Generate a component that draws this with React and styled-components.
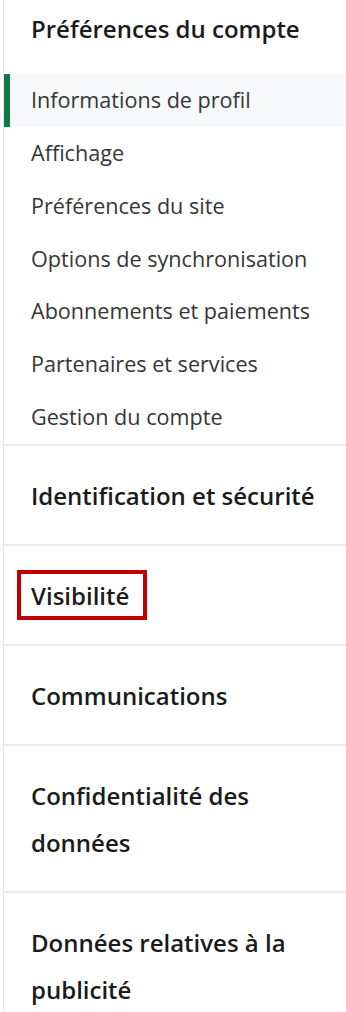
import styled, { createGlobalStyle } from "styled-components";

const GlobalStyle = createGlobalStyle`
  body {
    margin: 0;
    background: #ffffff;
    font-family: "Open Sans", "Noto Sans", sans-serif;
  }
`;

const accountLinks = [
  "Informations de profil",
  "Affichage",
  "Préférences du site",
  "Options de synchronisation",
  "Abonnements et paiements",
  "Partenaires et services",
  "Gestion du compte",
];

const sections = [
  { label: "Identification et sécurité" },
  { label: "Visibilité", marked: true },
  { label: "Communications" },
  { label: "Confidentialité des données" },
  { label: "Données relatives à la publicité" },
];

const App = () => {
  return (
    <>
      <GlobalStyle />
      <Nav>
        <Group>
          <GroupTitle>Préférences du compte</GroupTitle>
          <LinkList>
            {accountLinks.map((link, i) => (
              <LinkItem key={link} $active={i === 0}>
                {link}
              </LinkItem>
            ))}
          </LinkList>
        </Group>
        {sections.map((s) => (
          <Section key={s.label}>
            <SectionTitle $marked={s.marked}>{s.label}</SectionTitle>
          </Section>
        ))}
      </Nav>
    </>
  );
};

const Nav = styled.nav`
  margin-left: 3px;
  border-left: 1px solid #e6e6e6;
  min-height: 1012px;
  width: 343px;
  box-sizing: border-box;
`;

const Group = styled.div`
  padding-top: 5px;
`;

const GroupTitle = styled.h2`
  margin: 0 0 22px;
  padding-left: 27px;
  font-size: 24px;
  font-weight: 600;
  line-height: 47px;
  color: #1b1b1b;
  white-space: nowrap;
`;

const LinkList = styled.ul`
  list-style: none;
  margin: 0;
  padding: 0;
`;

const LinkItem = styled.li`
  height: 52.86px;
  line-height: 52.86px;
  padding-left: ${(p) => (p.$active ? "21px" : "27px")};
  border-left: ${(p) => (p.$active ? "6px solid #0f7a43" : "none")};
  background: ${(p) => (p.$active ? "#f7f8fa" : "transparent")};
  font-size: 21.6px;
  color: #363636;
  white-space: nowrap;
`;

const Section = styled.div`
  border-top: 2px solid #ececec;
  padding: 26px 16px 25px 27px;
`;

const SectionTitle = styled.div`
  position: relative;
  display: inline;
  font-size: 24px;
  font-weight: 600;
  line-height: 47px;
  color: #1b1b1b;

  &::after {
    content: "";
    display: ${(p) => (p.$marked ? "block" : "none")};
    position: absolute;
    top: -9px;
    bottom: -8px;
    left: -14px;
    right: -18px;
    border: 4px solid #c00000;
  }
`;

export default App;
